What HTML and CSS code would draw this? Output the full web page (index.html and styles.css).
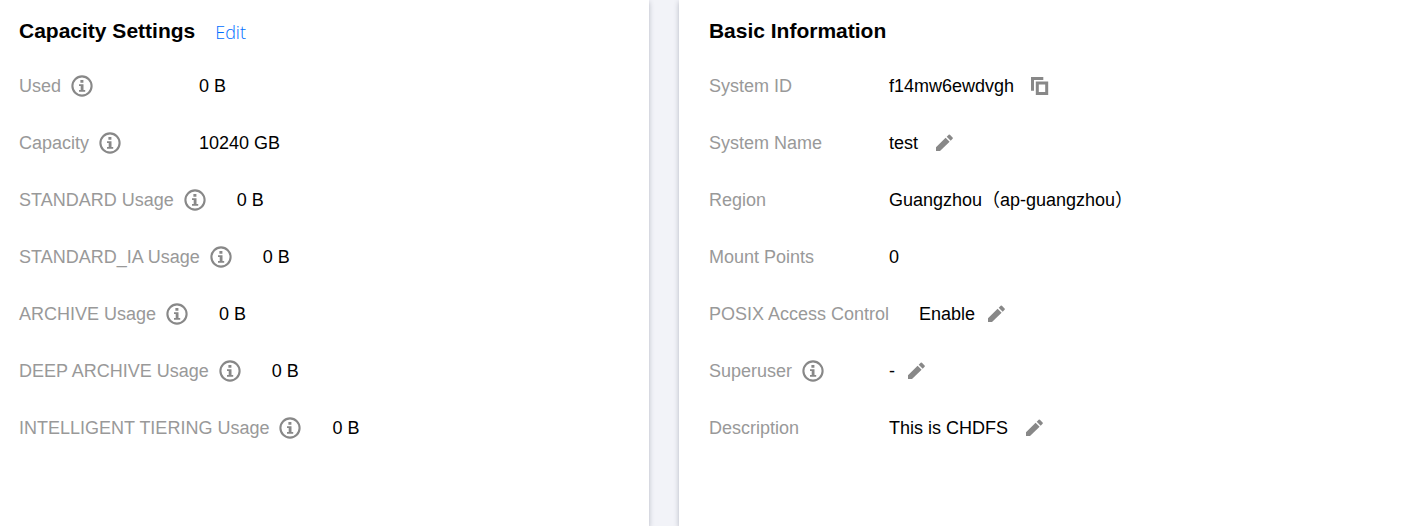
FILE: index.html
```
<!DOCTYPE html>
<html lang="en">
<head>
    <meta charset="UTF-8">
    <meta name="viewport" content="width=device-width, initial-scale=1.0">
    <title>Basic Information</title>
    <link rel="stylesheet" href="styles.css">
</head>
<body>
    <!-- icons -->
    <svg class="sprite" aria-hidden="true">
        <symbol id="icon-info" viewBox="0 0 23 22">
            <circle cx="11" cy="11" r="9.6" fill="none" stroke="currentColor" stroke-width="2.1"/>
            <path fill="currentColor" d="M9.4 5h3v2.7h-3zM8 9.2h4.5v5.8H14.2v1.8H8V15h1.7v-4H8z"/>
        </symbol>
        <symbol id="icon-copy" viewBox="0 0 18 18">
            <path fill="currentColor" d="M0 0h12.3v3H3v10.7H0z"/>
            <path fill="none" stroke="currentColor" stroke-width="3" d="M6.3 6h9.4v10.4H6.3z"/>
        </symbol>
        <symbol id="icon-edit" viewBox="-1 0 18 18">
            <path fill="currentColor" d="M0 13.2L9.6 3.8l4 4L4 17H0zM10.7 2.8l2-2q.6-.5 1.2 0l2.7 2.8q.5.6 0 1.2L14.7 6.8z"/>
        </symbol>
    </svg>

    <main class="page">
        <section class="card card-left">
            <header class="card-header">
                <h2>Capacity Settings</h2>
                <a class="edit-link" href="#">Edit</a>
            </header>
            <dl class="info-list">
                <div class="info-row">
                    <dt>Used <svg class="icon-info"><use href="#icon-info"/></svg></dt>
                    <dd>0 B</dd>
                </div>
                <div class="info-row">
                    <dt>Capacity <svg class="icon-info"><use href="#icon-info"/></svg></dt>
                    <dd>10240 GB</dd>
                </div>
                <div class="info-row">
                    <dt>STANDARD Usage <svg class="icon-info"><use href="#icon-info"/></svg></dt>
                    <dd>0 B</dd>
                </div>
                <div class="info-row">
                    <dt>STANDARD_IA Usage <svg class="icon-info"><use href="#icon-info"/></svg></dt>
                    <dd>0 B</dd>
                </div>
                <div class="info-row">
                    <dt>ARCHIVE Usage <svg class="icon-info"><use href="#icon-info"/></svg></dt>
                    <dd>0 B</dd>
                </div>
                <div class="info-row">
                    <dt>DEEP ARCHIVE Usage <svg class="icon-info"><use href="#icon-info"/></svg></dt>
                    <dd>0 B</dd>
                </div>
                <div class="info-row">
                    <dt>INTELLIGENT TIERING Usage <svg class="icon-info"><use href="#icon-info"/></svg></dt>
                    <dd>0 B</dd>
                </div>
            </dl>
        </section>

        <section class="card card-right">
            <header class="card-header">
                <h2>Basic Information</h2>
            </header>
            <dl class="info-list">
                <div class="info-row">
                    <dt>System ID</dt>
                    <dd class="wide">f14mw6ewdvgh <button type="button" class="icon-btn" aria-label="Copy"><svg><use href="#icon-copy"/></svg></button></dd>
                </div>
                <div class="info-row">
                    <dt>System Name</dt>
                    <dd class="wide">test <button type="button" class="icon-btn" aria-label="Edit"><svg><use href="#icon-edit"/></svg></button></dd>
                </div>
                <div class="info-row">
                    <dt>Region</dt>
                    <dd>Guangzhou（ap-guangzhou）</dd>
                </div>
                <div class="info-row">
                    <dt>Mount Points</dt>
                    <dd>0</dd>
                </div>
                <div class="info-row">
                    <dt>POSIX Access Control</dt>
                    <dd>Enable <button type="button" class="icon-btn" aria-label="Edit"><svg><use href="#icon-edit"/></svg></button></dd>
                </div>
                <div class="info-row">
                    <dt>Superuser <svg class="icon-info"><use href="#icon-info"/></svg></dt>
                    <dd>- <button type="button" class="icon-btn" aria-label="Edit"><svg><use href="#icon-edit"/></svg></button></dd>
                </div>
                <div class="info-row">
                    <dt>Description</dt>
                    <dd class="wide">This is CHDFS <button type="button" class="icon-btn" aria-label="Edit"><svg><use href="#icon-edit"/></svg></button></dd>
                </div>
            </dl>
        </section>
    </main>
</body>
</html>
```
FILE: styles.css
```
* {
    box-sizing: border-box;
}

body {
    margin: 0;
    background-color: #f2f3f8;
    font-family: "Liberation Sans", Arial, "Noto Sans CJK SC", sans-serif;
    font-size: 18px;
    line-height: 24px;
    color: #000;
}

.sprite {
    display: none;
}

.page {
    display: grid;
    grid-template-columns: 89fr 100fr;
    gap: 30px;
    min-height: 100vh;
}

.card {
    padding: 18px 30px;
    background-color: #fff;
    box-shadow: 0 2px 5px rgba(54, 58, 80, 0.32);
}

.card-left {
    padding-left: 19px;
}

.card-header {
    display: flex;
    align-items: center;
    gap: 20px;
    height: 26px;
    margin-bottom: 30px;
}

h2 {
    margin: 0;
    font-size: 21px;
    font-weight: bold;
}

.edit-link {
    padding-top: 2px;
    font-family: "Open Sans", "Noto Sans", sans-serif;
    font-weight: 300;
    color: #006eff;
    text-decoration: none;
}

/* label / value rows */
.info-list {
    display: flex;
    flex-direction: column;
    gap: 33px;
    margin: 0;
}

.info-row {
    display: flex;
}

dt {
    display: flex;
    align-items: center;
    gap: 10px;
    min-width: 180px;
    padding-right: 30px;
    color: #999;
    white-space: nowrap;
}

dd {
    display: flex;
    align-items: center;
    gap: 12px;
    margin: 0;
}

dd.wide {
    gap: 17px;
}

.icon-info {
    width: 23px;
    height: 22px;
    color: #888;
}

.icon-btn {
    width: 18px;
    height: 18px;
    padding: 0;
    border: none;
    background: none;
    color: #888;
    cursor: pointer;
}

.icon-btn svg {
    display: block;
    width: 18px;
    height: 18px;
}
```
